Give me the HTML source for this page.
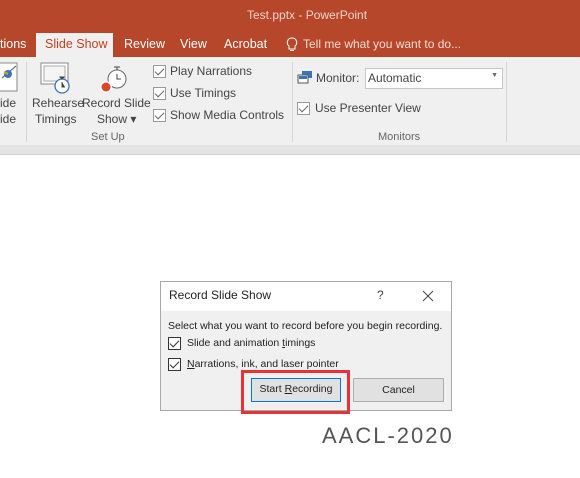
<!DOCTYPE html>
<html><head><style>
*{margin:0;padding:0;box-sizing:border-box}
body{width:580px;height:478px;overflow:hidden;background:#fff;font-family:"Segoe UI","Liberation Sans",sans-serif;position:relative}
.a{position:absolute;white-space:nowrap}
.cb{position:absolute;width:13px;height:13px;border:1px solid #333;background:#fff}
.cb:after{content:"";position:absolute;left:3px;top:0px;width:4px;height:8px;border:solid #333;border-width:0 1.3px 1.3px 0;transform:rotate(45deg)}
.rb{border-color:#9a9a9a}
.rb:after{border-color:#666}
.t{font-size:12px;color:#444}
</style></head><body>
<div class="a" style="left:0;top:0;width:580px;height:57px;background:#b7472a"></div>
<div class="a" style="left:247px;top:8px;font-size:12px;color:#f2d3c9">Test.pptx - PowerPoint</div>
<div class="a" style="left:36px;top:33px;width:77px;height:25px;background:#f0f0f0"></div>
<div class="a" style="top:37px;left:0;font-size:12.5px;color:#fff">tions</div>
<div class="a" style="top:37px;left:45px;font-size:12.5px;color:#c43e1c">Slide Show</div>
<div class="a" style="top:37px;left:124px;font-size:12.5px;color:#fff">Review</div>
<div class="a" style="top:37px;left:180px;font-size:12.5px;color:#fff">View</div>
<div class="a" style="top:37px;left:224px;font-size:12.5px;color:#fff">Acrobat</div>
<svg class="a" style="left:286px;top:37px" width="12" height="16"><path d="M6 1a4.5 4.5 0 0 0-3 8v3h6V9a4.5 4.5 0 0 0-3-8zM4 13.5h4" fill="none" stroke="#fff" stroke-width="1"/></svg>
<div class="a" style="top:37px;left:303px;font-size:12px;color:#f6dcd3">Tell me what you want to do...</div>
<div class="a" style="left:0;top:57px;width:580px;height:88px;background:#f0f0f0"></div>
<div class="a" style="left:0;top:145px;width:580px;height:10px;background:#e4e4e4;border-bottom:1px solid #d0d0d0"></div>
<div class="a" style="left:26px;top:62px;width:1px;height:80px;background:#d6d6d6"></div>
<div class="a" style="left:292px;top:62px;width:1px;height:80px;background:#d6d6d6"></div>
<div class="a" style="left:506px;top:62px;width:1px;height:80px;background:#d6d6d6"></div>
<svg class="a" style="left:0;top:62px" width="20" height="32"><rect x="-5" y="1" width="22" height="28" fill="#fff" stroke="#888"/><path d="M2 16l14-12" stroke="#555"/><circle cx="8" cy="12" r="4" fill="#3b73b9"/><path d="M4 10l4 2" stroke="#e8a030" stroke-width="2"/></svg>
<div class="a t" style="left:0;top:96px">ide</div>
<div class="a t" style="left:0;top:112px">ide</div>
<svg class="a" style="left:40px;top:62px" width="32" height="32"><rect x="1" y="1" width="27" height="21" fill="#fff" stroke="#888"/><rect x="4" y="4" width="21" height="15" fill="#f5f5f5" stroke="#aaa"/><circle cx="22" cy="24" r="7" fill="#fff" stroke="#3b73b9" stroke-width="1.3"/><path d="M22 20v5h3M20 15h4l-2 2z" stroke="#444" fill="#444"/></svg>
<div class="a t" style="left:32px;top:96px">Rehearse</div>
<div class="a t" style="left:35px;top:112px">Timings</div>
<svg class="a" style="left:97px;top:62px" width="32" height="32"><circle cx="20" cy="17" r="9" fill="#fff" stroke="#666"/><path d="M20 12v5h4M17 5h6M20 5v3" stroke="#444" fill="none"/><circle cx="9" cy="25" r="6" fill="#fff"/><circle cx="9" cy="25" r="4.5" fill="#d9462a"/></svg>
<div class="a t" style="left:82px;top:96px">Record Slide</div>
<div class="a t" style="left:97px;top:112px">Show ▾</div>
<div class="a" style="left:91px;top:131px;font-size:11px;color:#666">Set Up</div>
<div class="cb rb" style="left:153px;top:65px"></div><div class="a t" style="left:170px;top:64px">Play Narrations</div>
<div class="cb rb" style="left:153px;top:87px"></div><div class="a t" style="left:170px;top:86px">Use Timings</div>
<div class="cb rb" style="left:153px;top:109px"></div><div class="a t" style="left:170px;top:108px">Show Media Controls</div>
<svg class="a" style="left:297px;top:70px" width="16" height="14"><rect x="5" y="1" width="10" height="7" fill="#3b73b9"/><rect x="1" y="5" width="10" height="8" fill="#fff" stroke="#555"/><rect x="2" y="6" width="8" height="3" fill="#3b73b9"/></svg>
<div class="a t" style="left:316px;top:71px">Monitor:</div>
<div class="a" style="left:365px;top:68px;width:138px;height:21px;background:#fff;border:1px solid #c6c6c6;font-size:12px;color:#444;padding:2px 0 0 2px">Automatic<span style="position:absolute;right:4px;top:3px;font-size:7px;color:#666">▼</span></div>
<div class="cb rb" style="left:297px;top:102px"></div><div class="a t" style="left:315px;top:101px">Use Presenter View</div>
<div class="a" style="left:378px;top:131px;font-size:11px;color:#666">Monitors</div>
<div class="a" style="left:160px;top:281px;width:292px;height:130px;background:#f0f0f0;border:1px solid #a8a8a8"></div>
<div class="a" style="left:161px;top:282px;width:290px;height:29px;background:#fff"></div>
<div class="a" style="left:169px;top:288px;font-size:12px;color:#222">Record Slide Show</div>
<div class="a" style="left:377px;top:288px;font-size:12px;color:#444">?</div>
<svg class="a" style="left:422px;top:290px" width="12" height="12"><path d="M1 1l10 10M11 1L1 11" stroke="#444" stroke-width="1"/></svg>
<div class="a" style="left:168px;top:320px;font-size:10.5px;color:#222">Select what you want to record before you begin recording.</div>
<div class="cb" style="left:168px;top:337px"></div><div class="a" style="left:187px;top:337px;font-size:10.5px;color:#222">Slide and animation <u>t</u>imings</div>
<div class="cb" style="left:168px;top:358px"></div><div class="a" style="left:187px;top:358px;font-size:10.5px;color:#222"><u>N</u>arrations, ink, and laser pointer</div>
<div class="a" style="left:251px;top:378px;width:90px;height:24px;background:#e1e1e1;border:1.5px solid #0078d7;font-size:10.5px;color:#222;text-align:center;line-height:21px">Start <u>R</u>ecording</div>
<div class="a" style="left:353px;top:378px;width:91px;height:24px;background:#e1e1e1;border:1px solid #adadad;font-size:10.5px;color:#222;text-align:center;line-height:22px">Cancel</div>
<div class="a" style="left:241px;top:370px;width:109px;height:44px;border:3px solid #e8323a"></div>
<div class="a" style="left:322px;top:423px;font-size:22px;letter-spacing:2px;color:#555;font-family:'Liberation Sans',sans-serif">AACL-2020</div>
</body></html>
